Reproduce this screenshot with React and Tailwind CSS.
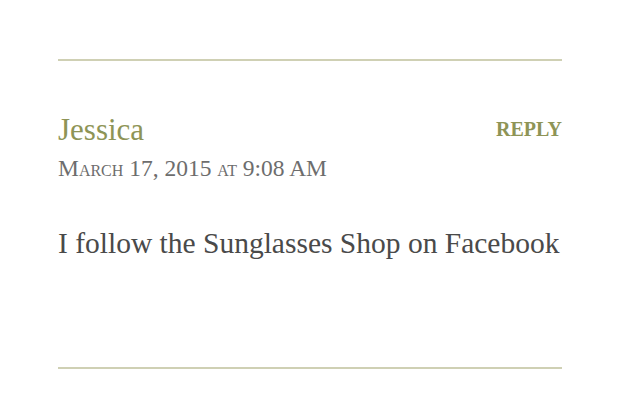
export default function App() {
  return (
    <div className="w-[640px] h-[405px] bg-white pl-[58px] pr-[78px] pt-[59px]" style={{ fontFamily: '"Liberation Serif", "DejaVu Serif", serif' }}>
      <div className="h-[2px] bg-[#cfd0b4]" />
      <div className="flex items-start justify-between pt-[52px]">
        <div className="flex flex-col">
          <span className="text-[31px] leading-[34px] text-[#8e9456]">Jessica</span>
          <span className="mt-[6px] text-[23.5px] leading-[30px] text-[#6d6d6d] [font-variant:small-caps]">March 17, 2015 at 9:08 AM</span>
        </div>
        <span className="mt-[1px] text-[20px] font-bold text-[#8e9456]">REPLY</span>
      </div>
      <p className="mt-[43px] text-[29.5px] leading-[34px] text-[#4a4a4a]">I follow the Sunglasses Shop on Facebook</p>
      <div className="mt-[107px] h-[2px] bg-[#cfd0b4]" />
    </div>
  );
}
